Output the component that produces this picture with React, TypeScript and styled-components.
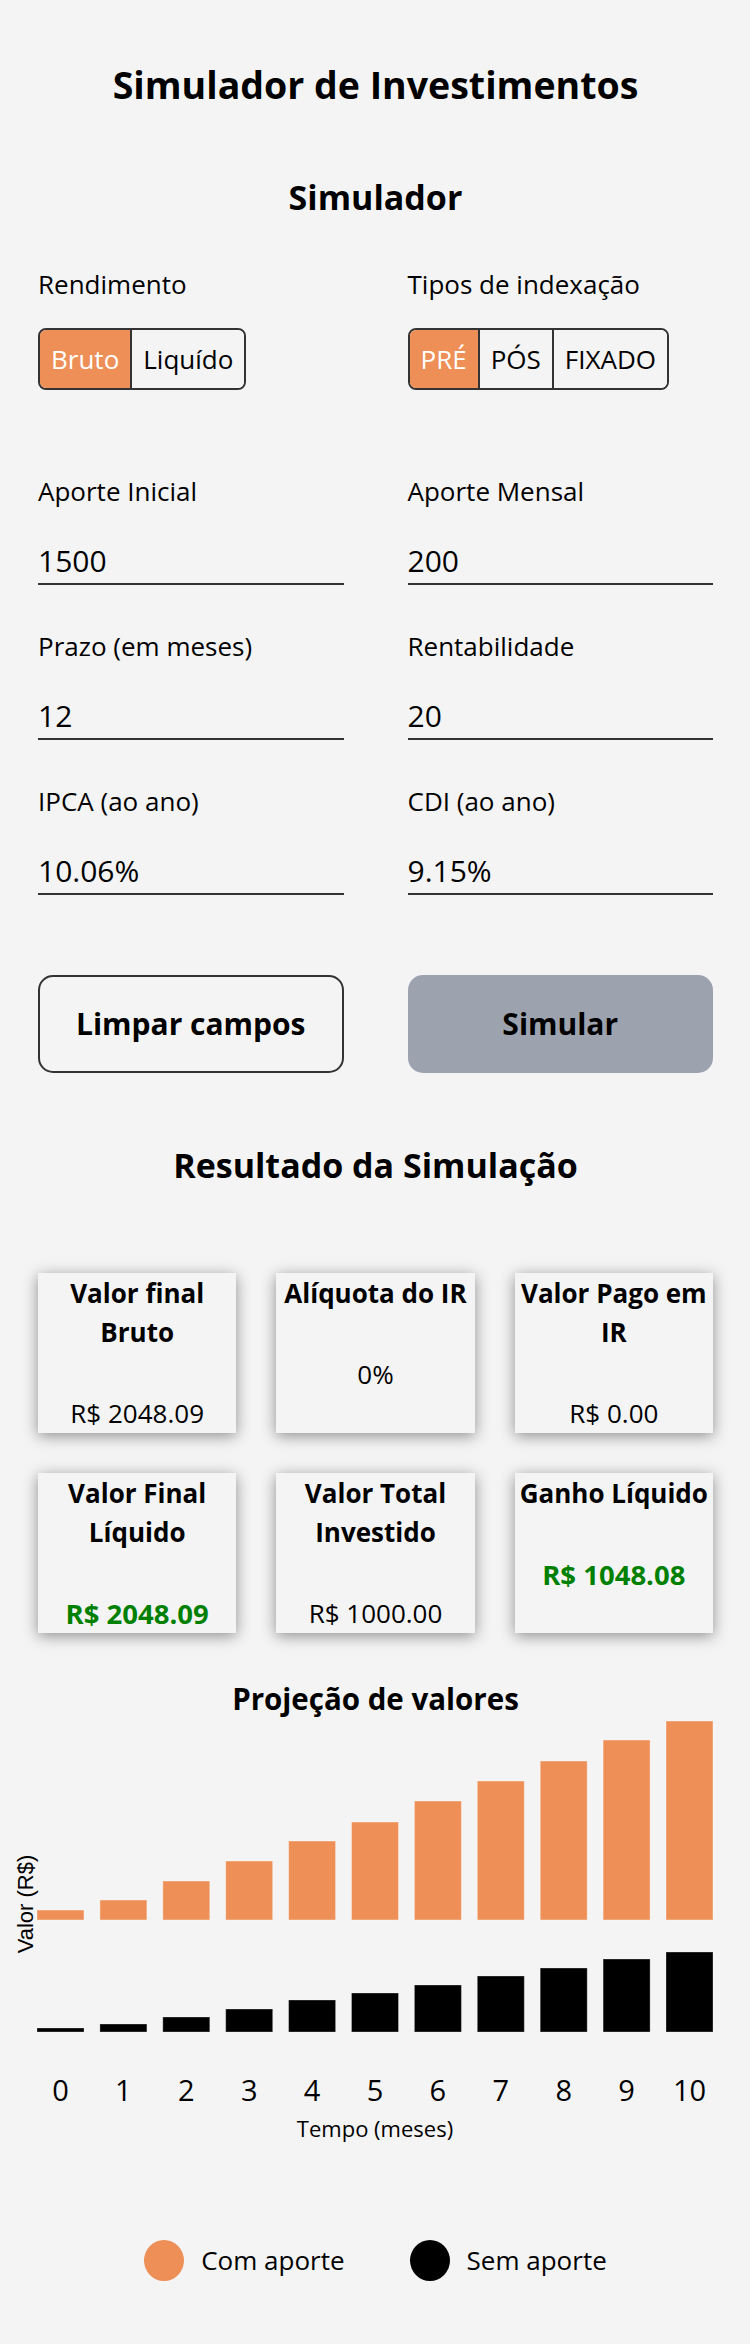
import React from "react";
import styled, { createGlobalStyle } from "styled-components";

const GlobalStyle = createGlobalStyle`
  html, body { margin: 0; padding: 0; background: #f4f4f4; }
  body { font-family: "Open Sans", "Noto Sans", sans-serif; color: #000; }
  * { box-sizing: border-box; }
`;

const ORANGE = "#ed8f56";

const Page = styled.main`
  width: 750px;
  padding: 60px 37px 62px 38px;
  display: flex;
  flex-direction: column;
`;

const Title = styled.h1`
  margin: 0;
  font-size: 37.5px;
  line-height: 50px;
  font-weight: 700;
  text-align: center;
`;

const SectionTitle = styled.h2<{ $gap: number }>`
  margin: ${(p) => p.$gap}px 0 0;
  font-size: 34px;
  line-height: 46px;
  font-weight: 700;
  text-align: center;
`;

const TwoCols = styled.div<{ $gap: number; $rowGap?: number }>`
  margin-top: ${(p) => p.$gap}px;
  display: grid;
  grid-template-columns: 1fr 1fr;
  column-gap: 64px;
  row-gap: ${(p) => p.$rowGap ?? 0}px;
`;

const Field = styled.div`
  display: flex;
  flex-direction: column;
  align-items: flex-start;
`;

const Label = styled.label`
  font-size: 26px;
  line-height: 36px;
`;

const ToggleGroup = styled.div`
  margin-top: 26px;
  display: flex;
  height: 62px;
  border: 2px solid #333;
  border-radius: 8px;
  overflow: hidden;
`;

const ToggleButton = styled.button<{ $active?: boolean }>`
  font-family: inherit;
  font-size: 26px;
  line-height: 58px;
  padding: 0 11px;
  border: none;
  margin: 0;
  background: ${(p) => (p.$active ? ORANGE : "#f4f4f4")};
  color: ${(p) => (p.$active ? "#fff" : "#000")};
  & + & {
    border-left: 2px solid #333;
  }
`;

const Input = styled.input`
  margin-top: 31.5px;
  width: 100%;
  height: 44px;
  padding: 0 0 2px;
  border: none;
  border-bottom: 2px solid #333;
  background: transparent;
  font-family: inherit;
  font-size: 30px;
  color: #000;
  outline: none;
`;

const ActionButton = styled.button<{ $primary?: boolean }>`
  height: 98px;
  border-radius: 15px;
  border: ${(p) => (p.$primary ? "none" : "2px solid #333")};
  background: ${(p) => (p.$primary ? "#9ca3af" : "transparent")};
  font-family: inherit;
  font-size: 30px;
  font-weight: 700;
  color: #000;
`;

const Cards = styled.div`
  margin-top: 85px;
  display: grid;
  grid-template-columns: repeat(3, 1fr);
  column-gap: 40px;
  row-gap: 40px;
`;

const Card = styled.div`
  background: #f4f4f4;
  box-shadow: 0 3px 14px rgba(0, 0, 0, 0.42);
  padding-top: 1px;
  text-align: center;
`;

const CardTitle = styled.h4`
  margin: 0;
  font-size: 26px;
  line-height: 39px;
  font-weight: 700;
`;

const CardValue = styled.p<{ $highlight?: boolean }>`
  margin: 42px 0 0;
  font-size: ${(p) => (p.$highlight ? 27.5 : 26)}px;
  line-height: 39px;
  font-weight: ${(p) => (p.$highlight ? 700 : 400)};
  color: ${(p) => (p.$highlight ? "#008000" : "#000")};
`;

const ChartTitle = styled.h3`
  margin: 46px 0 0;
  font-size: 29.5px;
  line-height: 40px;
  font-weight: 700;
  text-align: center;
`;

const ChartSvg = styled.svg`
  display: block;
  margin: 0 -37px 0 -38px;
`;

const Legend = styled.div`
  margin-top: 81px;
  display: flex;
  justify-content: center;
  gap: 65px;
`;

const LegendItem = styled.div`
  display: flex;
  align-items: center;
  gap: 17px;
  font-size: 26px;
  line-height: 36px;
`;

const Dot = styled.span<{ $color: string }>`
  width: 40px;
  height: 41px;
  border-radius: 50%;
  background: ${(p) => p.$color};
`;

const comAporte = [10, 20, 39, 59, 79, 98, 119, 139, 159, 180, 199];
const semAporte = [4, 8, 15, 23, 32, 39, 47, 56, 64, 73, 80];

function Chart() {
  const step = 62.9;
  const x0 = 37;
  const w = 47;
  return (
    <ChartSvg width={750} height={440} viewBox="0 0 750 440">
      {comAporte.map((h, i) => (
        <rect
          key={`c${i}`}
          x={x0 + i * step}
          y={201 - h}
          width={w}
          height={h}
          fill={ORANGE}
          stroke="rgba(255,255,255,0.4)"
          strokeWidth={1}
        />
      ))}
      {semAporte.map((h, i) => (
        <rect
          key={`s${i}`}
          x={x0 + i * step}
          y={313 - h}
          width={w}
          height={h}
          fill="#000"
          stroke="rgba(255,255,255,0.3)"
          strokeWidth={1}
        />
      ))}
      {comAporte.map((_, i) => (
        <text
          key={`t${i}`}
          x={x0 + w / 2 + i * step}
          y={382}
          textAnchor="middle"
          fontFamily="'Open Sans', sans-serif"
          fontSize={29}
          fill="#000"
        >
          {i}
        </text>
      ))}
      <text x={375} y={418} textAnchor="middle" fontFamily="'Open Sans', sans-serif" fontSize={22} fill="#000">
        Tempo (meses)
      </text>
      <g transform="translate(33 185)">
        <text
          x={0}
          y={0}
          textAnchor="middle"
          transform="rotate(-90)"
          fontFamily="'Liberation Sans', Arial, sans-serif"
          fontSize={22}
          fill="#000"
        >
          Valor (R$)
        </text>
      </g>
    </ChartSvg>
  );
}

export default function App() {
  return (
    <>
      <GlobalStyle />
      <Page>
        <Title>Simulador de Investimentos</Title>
        <SectionTitle $gap={64}>Simulador</SectionTitle>

        <TwoCols $gap={46}>
          <Field>
            <Label>Rendimento</Label>
            <ToggleGroup>
              <ToggleButton $active>Bruto</ToggleButton>
              <ToggleButton>Liquído</ToggleButton>
            </ToggleGroup>
          </Field>
          <Field>
            <Label>Tipos de indexação</Label>
            <ToggleGroup>
              <ToggleButton $active>PRÉ</ToggleButton>
              <ToggleButton>PÓS</ToggleButton>
              <ToggleButton>FIXADO</ToggleButton>
            </ToggleGroup>
          </Field>
        </TwoCols>

        <TwoCols $gap={83} $rowGap={43.5}>
          <Field>
            <Label>Aporte Inicial</Label>
            <Input defaultValue="1500" />
          </Field>
          <Field>
            <Label>Aporte Mensal</Label>
            <Input defaultValue="200" />
          </Field>
          <Field>
            <Label>Prazo (em meses)</Label>
            <Input defaultValue="12" />
          </Field>
          <Field>
            <Label>Rentabilidade</Label>
            <Input defaultValue="20" />
          </Field>
          <Field>
            <Label>IPCA (ao ano)</Label>
            <Input defaultValue="10.06%" />
          </Field>
          <Field>
            <Label>CDI (ao ano)</Label>
            <Input defaultValue="9.15%" />
          </Field>
        </TwoCols>

        <TwoCols $gap={80}>
          <ActionButton>Limpar campos</ActionButton>
          <ActionButton $primary>Simular</ActionButton>
        </TwoCols>

        <SectionTitle $gap={69}>Resultado da Simulação</SectionTitle>

        <Cards>
          <Card>
            <CardTitle>Valor final Bruto</CardTitle>
            <CardValue>R$ 2048.09</CardValue>
          </Card>
          <Card>
            <CardTitle>Alíquota do IR</CardTitle>
            <CardValue>0%</CardValue>
          </Card>
          <Card>
            <CardTitle>Valor Pago em IR</CardTitle>
            <CardValue>R$ 0.00</CardValue>
          </Card>
          <Card>
            <CardTitle>Valor Final Líquido</CardTitle>
            <CardValue $highlight>R$ 2048.09</CardValue>
          </Card>
          <Card>
            <CardTitle>Valor Total Investido</CardTitle>
            <CardValue>R$ 1000.00</CardValue>
          </Card>
          <Card>
            <CardTitle>Ganho Líquido</CardTitle>
            <CardValue $highlight>R$ 1048.08</CardValue>
          </Card>
        </Cards>

        <ChartTitle>Projeção de valores</ChartTitle>
        <Chart />

        <Legend>
          <LegendItem>
            <Dot $color={ORANGE} />
            Com aporte
          </LegendItem>
          <LegendItem>
            <Dot $color="#000" />
            Sem aporte
          </LegendItem>
        </Legend>
      </Page>
    </>
  );
}
